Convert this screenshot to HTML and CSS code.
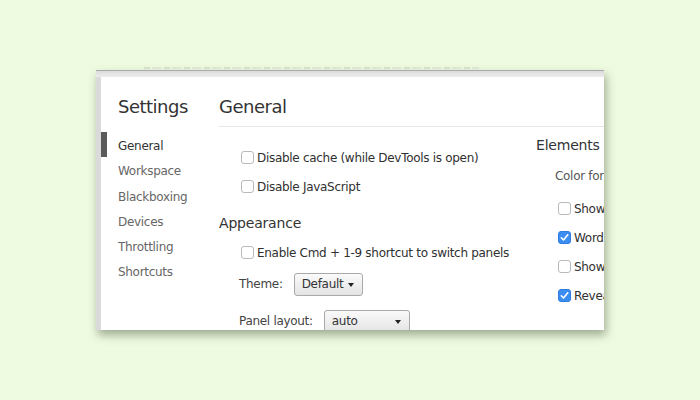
FILE: index.html
```html
<!DOCTYPE html>
<html>
<head>
<meta charset="utf-8">
<link rel="stylesheet" href="styles.css">
</head>
<body>
<div class="desk">
  <div class="ghost"></div>
  <div class="window">
    <div class="topstrip"></div>
    <div class="body">
      <aside class="sidebar">
        <div class="title">Settings</div>
        <ul class="tabs">
          <li class="tab selected">General</li>
          <li class="tab">Workspace</li>
          <li class="tab">Blackboxing</li>
          <li class="tab">Devices</li>
          <li class="tab">Throttling</li>
          <li class="tab">Shortcuts</li>
        </ul>
      </aside>
      <main class="content">
        <div class="header">General</div>
        <div class="columns">
          <section class="col left">
            <label class="row check-row"><span class="cb"></span>Disable cache (while DevTools is open)</label>
            <label class="row check-row"><span class="cb"></span>Disable JavaScript</label>
            <h2 class="section">Appearance</h2>
            <label class="row check-row enable"><span class="cb"></span>Enable Cmd + 1-9 shortcut to switch panels</label>
            <div class="row select-row theme"><span class="lbl">Theme:</span><span class="select s-theme">Default<span class="arrow"></span></span></div>
            <div class="row select-row panel"><span class="lbl">Panel layout:</span><span class="select s-panel">auto<span class="arrow"></span></span></div>
          </section>
          <section class="col right">
            <h2 class="section el">Elements</h2>
            <div class="row plain">Color format:</div>
            <label class="row check-row"><span class="cb"></span>Show user agent shadow DOM</label>
            <label class="row check-row"><span class="cb on"><svg viewBox="0 0 13 13" width="13" height="13"><path d="M3.3 6.8 L5.5 9 L9.8 3.8" fill="none" stroke="#fff" stroke-width="1.6" stroke-linecap="round" stroke-linejoin="round"/></svg></span>Word wrap</label>
            <label class="row check-row"><span class="cb"></span>Show rulers</label>
            <label class="row check-row"><span class="cb on"><svg viewBox="0 0 13 13" width="13" height="13"><path d="M3.3 6.8 L5.5 9 L9.8 3.8" fill="none" stroke="#fff" stroke-width="1.6" stroke-linecap="round" stroke-linejoin="round"/></svg></span>Reveal DOM node on hover</label>
          </section>
        </div>
      </main>
    </div>
  </div>
</div>
</body>
</html>
```
FILE: styles.css
```css
html, body {
  margin: 0;
  padding: 0;
  background: #eefbe0;
  width: 700px;
  height: 400px;
  overflow: hidden;
}
.desk {
  padding-top: 67px;
  padding-left: 96px;
}
.ghost {
  margin-left: 48px;
  width: 335px;
  height: 2px;
  margin-bottom: 1px;
  background: repeating-linear-gradient(90deg, #ced5c9 0 6px, transparent 6px 8px, #d8ded3 8px 17px, transparent 17px 20px);
  opacity: 0.7;
}
.window {
  width: 508px;
  height: 260px;
  background: #fff;
  border-top: 1px solid #a9a9a9;
  box-sizing: border-box;
  box-shadow: 2px 5px 9px rgba(60, 70, 50, 0.45);
  overflow: hidden;
  display: flex;
  flex-direction: column;
  font-family: "DejaVu Sans", "Liberation Sans", sans-serif;
  color: #303030;
}
.topstrip {
  height: 6px;
  background: linear-gradient(#dcdcdc, #ececec);
  flex: none;
}
.body {
  flex: 1;
  display: flex;
  border-left: 5px solid #dadada;
  min-height: 0;
}
.sidebar {
  width: 118px;
  flex: none;
}
.title {
  font-size: 18px;
  line-height: 24px;
  padding: 18px 0 0 17px;
  color: #333;
  letter-spacing: -0.5px;
}
.tabs {
  list-style: none;
  margin: 13px 0 0 0;
  padding: 0;
}
.tab {
  height: 25.3px;
  line-height: 29px;
  font-size: 12px;
  padding-left: 11px;
  color: #666;
  border-left: 6px solid transparent;
  letter-spacing: -0.3px;
}
.tab.selected {
  border-left-color: #5a5a5a;
  color: #333;
}
.content {
  flex: 1;
  display: flex;
  flex-direction: column;
  min-width: 0;
}
.header {
  font-size: 18px;
  line-height: 24px;
  padding: 18px 0 7px 0;
  border-bottom: 1px solid #e6e6e6;
  color: #333;
  letter-spacing: -0.5px;
}
.columns {
  display: flex;
}
.col.left {
  width: 317px;
  flex: none;
  padding-top: 16px;
}
.col.right {
  flex: none;
  width: 200px;
  padding-top: 8px;
}
.row {
  display: flex;
  align-items: center;
  height: 29px;
  font-size: 12px;
  white-space: nowrap;
  letter-spacing: -0.3px;
}
.check-row {
  padding-left: 22px;
}
.check-row.enable {
  margin-top: 5px;
}
.cb {
  width: 13px;
  height: 13px;
  box-sizing: border-box;
  border: 1px solid #b9b9b9;
  border-radius: 3px;
  background: #fff;
  margin-right: 3px;
  flex: none;
  display: inline-flex;
}
.cb.on {
  background: #3b8df2;
  border-color: #2f7de0;
}
.cb.on svg {
  margin: -1px;
}
.section {
  margin: 12px 0 0 0;
  font-weight: normal;
  font-size: 14px;
  line-height: 20px;
  height: 20px;
  color: #333;
  letter-spacing: -0.2px;
}
.col.right .section.el {
  margin: 0;
}
.plain {
  padding-left: 19px;
  color: #555;
  height: 30px;
  margin-top: 6px;
  margin-bottom: 3px;
}
.select-row {
  padding-left: 20px;
}
.select-row.theme {
  height: 34px;
}
.select-row.panel {
  height: 36px;
  margin-top: 2px;
}
.lbl {
  color: #444;
}
.select {
  display: inline-flex;
  align-items: center;
  box-sizing: border-box;
  height: 23px;
  border: 1px solid #a9a9a9;
  border-radius: 3px;
  background: linear-gradient(#fafafa, #e4e4e4);
  padding-left: 7px;
  color: #333;
  position: relative;
}
.s-theme {
  margin-left: 11px;
  width: 69px;
}
.s-panel {
  margin-left: 11px;
  width: 86px;
}
.arrow {
  position: absolute;
  right: 8px;
  top: 9px;
  width: 0;
  height: 0;
  border-left: 3.5px solid transparent;
  border-right: 3.5px solid transparent;
  border-top: 4px solid #222;
}
```
